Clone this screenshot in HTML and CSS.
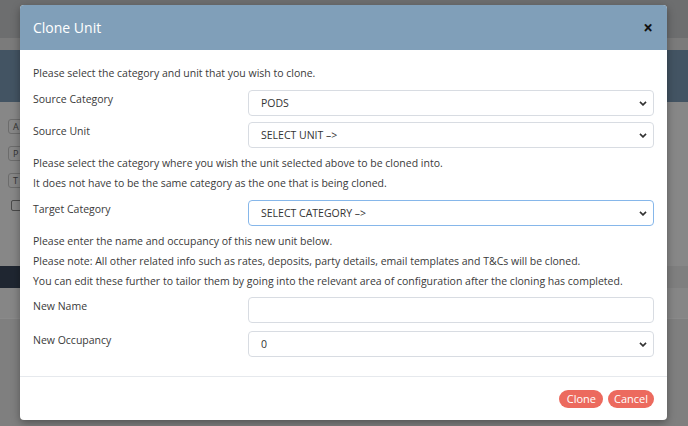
FILE: index.html
```html
<!DOCTYPE html>
<html lang="en">
<head>
<meta charset="utf-8">
<title>Clone Unit</title>
<link rel="stylesheet" href="styles.css">
</head>
<body>
<div class="page">
  <div class="topbar"></div>
  <div class="band"></div>
  <div class="hero"></div>
  <div class="content">
    <div class="chip">A</div>
    <div class="chip">P</div>
    <div class="chip">T</div>
    <div class="check"></div>
  </div>
  <div class="darkbar"></div>
  <div class="strip"></div>
  <div class="rest"></div>
</div>

<div class="modal">
  <div class="modal-header">
    <h4 class="modal-title">Clone Unit</h4>
    <span class="close">&times;</span>
  </div>
  <div class="modal-body">
    <p class="note">Please select the category and unit that you wish to clone.</p>
    <div class="row">
      <label class="label">Source Category</label>
      <div class="select">PODS<svg class="chev" viewBox="0 0 10 6" width="8" height="5"><path d="M1.2 1l3.8 3.8 3.8-3.8" fill="none" stroke="#333" stroke-width="2"/></svg></div>
    </div>
    <div class="row">
      <label class="label">Source Unit</label>
      <div class="select">SELECT UNIT –&gt;<svg class="chev" viewBox="0 0 10 6" width="8" height="5"><path d="M1.2 1l3.8 3.8 3.8-3.8" fill="none" stroke="#333" stroke-width="2"/></svg></div>
    </div>
    <p class="note after-row">Please select the category where you wish the unit selected above to be cloned into.</p>
    <p class="note">It does not have to be the same category as the one that is being cloned.</p>
    <div class="row">
      <label class="label">Target Category</label>
      <div class="select focus">SELECT CATEGORY –&gt;<svg class="chev" viewBox="0 0 10 6" width="8" height="5"><path d="M1.2 1l3.8 3.8 3.8-3.8" fill="none" stroke="#333" stroke-width="2"/></svg></div>
    </div>
    <p class="note after-row">Please enter the name and occupancy of this new unit below.</p>
    <p class="note">Please note: All other related info such as rates, deposits, party details, email templates and T&amp;Cs will be cloned.</p>
    <p class="note">You can edit these further to tailor them by going into the relevant area of configuration after the cloning has completed.</p>
    <div class="row loose">
      <label class="label">New Name</label>
      <div class="select"></div>
    </div>
    <div class="row loose">
      <label class="label">New Occupancy</label>
      <div class="select">0<svg class="chev" viewBox="0 0 10 6" width="8" height="5"><path d="M1.2 1l3.8 3.8 3.8-3.8" fill="none" stroke="#333" stroke-width="2"/></svg></div>
    </div>
  </div>
  <div class="modal-footer">
    <button class="btn btn-clone">Clone</button>
    <button class="btn">Cancel</button>
  </div>
</div>
</body>
</html>
```

FILE: styles.css
```css
* { box-sizing: border-box; }
html, body { margin: 0; padding: 0; }
body {
  width: 688px;
  height: 426px;
  overflow: hidden;
  position: relative;
  font-family: "Open Sans", "Liberation Sans", sans-serif;
  background: #7f7f7f;
}

/* background app (seen through backdrop) */
.page { display: flex; flex-direction: column; height: 426px; }
.topbar { height: 38px; background: #6d6e6f; }
.band { height: 12px; background: #7b7b7b; }
.hero { height: 52px; background: #435463; }
.content {
  height: 164px;
  background: #878787;
  padding: 17px 0 0 8px;
  display: flex;
  flex-direction: column;
  gap: 12px;
}
.chip {
  width: 30px;
  height: 15px;
  border: 1px solid #6c6c6c;
  border-radius: 3px;
  font: 9px/13px "Open Sans", sans-serif;
  color: #333;
  padding-left: 4px;
}
.check {
  width: 11px;
  height: 11px;
  border: 1px solid #4a4a4a;
  border-radius: 2px;
  margin-left: 3px;
}
.darkbar { height: 22px; background: #1f2631; width: 300px; }
.strip { height: 30px; background: #868686; }
.rest { flex: 1; background: #7f7f7f; border-top: 1px solid #8a8a8a; }

/* modal (overlay) */
.modal {
  position: absolute;
  left: 20px;
  top: 5px;
  width: 647px;
  height: 415px;
  background: #fff;
  border-radius: 4px;
  overflow: hidden;
  box-shadow: 0 3px 9px rgba(0,0,0,.35);
  display: flex;
  flex-direction: column;
  color: #3a3a3a;
}
.modal-header {
  height: 45px;
  flex: none;
  background: #809fb9;
  display: flex;
  align-items: center;
  justify-content: space-between;
  padding: 0 14px 0 13px;
}
.modal-title {
  margin: 0;
  font-size: 14px;
  font-weight: 400;
  color: #fff;
}
.close {
  font-size: 17px;
  font-weight: 700;
  color: #111;
  line-height: 1;
}
.modal-body {
  flex: 1;
  display: flex;
  flex-direction: column;
  padding: 15px 13px 0 13px;
  font-size: 10.5px;
}
.note { margin: 0; line-height: 16px; }
.note + .note { margin-top: 4px; }
.note.after-row { margin-top: 7px; }
.row {
  display: grid;
  grid-template-columns: 215px 1fr;
}
.note + .row { margin-top: 9px; }
.row + .row { margin-top: 6px; }
.note + .row.loose { margin-top: 8px; }
.row.loose + .row.loose { margin-top: 8px; }
.label { line-height: 16px; padding-top: 1px; }
.select {
  position: relative;
  height: 26px;
  border: 1px solid #d8dce2;
  border-radius: 4px;
  padding: 0 12px;
  line-height: 24px;
  color: #333;
}
.select.focus { border-color: #86b7ea; }
.chev { position: absolute; right: 6px; top: 10px; }
.modal-footer {
  height: 44px;
  flex: none;
  border-top: 1px solid #e6e9ed;
  display: flex;
  align-items: center;
  justify-content: flex-end;
  gap: 5px;
  padding: 0 13px;
}
.btn {
  height: 18px;
  border: none;
  border-radius: 9px;
  background: #ec6a5e;
  color: #fff;
  font: 11px/18px "Open Sans", sans-serif;
  padding: 0 6px;
}
.btn-clone { padding: 0 7px 0 8px; }
```
